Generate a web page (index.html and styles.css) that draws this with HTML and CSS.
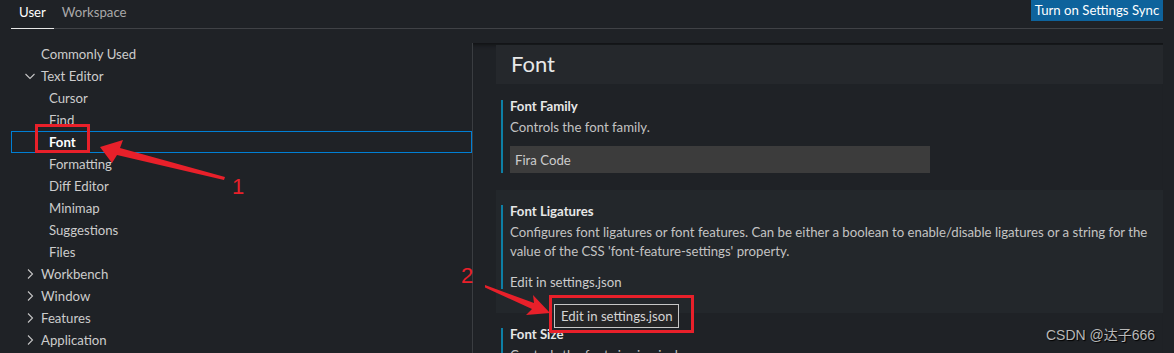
FILE: index.html
```html
<!DOCTYPE html>
<html lang="en">
<head>
  <meta charset="UTF-8">
  <title>Settings</title>
  <link rel="stylesheet" href="styles.css">
</head>
<body>
  <div class="topbar">
    <div class="tabs">
      <span class="tab active">User</span>
      <span class="tab">Workspace</span>
    </div>
    <button class="sync">Turn on Settings Sync</button>
  </div>

  <div class="main">
    <nav class="toc">
      <div class="row top">Commonly Used</div>
      <div class="row top">
        <svg class="chev" viewBox="0 0 16 16"><path d="M3.5 6l4.5 4.5L12.5 6"/></svg>Text Editor
      </div>
      <div class="row child">Cursor</div>
      <div class="row child">Find</div>
      <div class="row child selected">Font</div>
      <div class="row child">Formatting</div>
      <div class="row child">Diff Editor</div>
      <div class="row child">Minimap</div>
      <div class="row child">Suggestions</div>
      <div class="row child">Files</div>
      <div class="row top">
        <svg class="chev" viewBox="0 0 16 16"><path d="M6 3.5l4.5 4.5L6 12.5"/></svg>Workbench
      </div>
      <div class="row top">
        <svg class="chev" viewBox="0 0 16 16"><path d="M6 3.5l4.5 4.5L6 12.5"/></svg>Window
      </div>
      <div class="row top">
        <svg class="chev" viewBox="0 0 16 16"><path d="M6 3.5l4.5 4.5L6 12.5"/></svg>Features
      </div>
      <div class="row top">
        <svg class="chev" viewBox="0 0 16 16"><path d="M6 3.5l4.5 4.5L6 12.5"/></svg>Application
      </div>
    </nav>

    <section class="content">
      <div class="group-title">Font</div>

      <div class="setting">
        <div class="setting-body">
          <div class="setting-title">Font Family</div>
          <div class="setting-desc">Controls the font family.</div>
          <div class="text-input">Fira Code</div>
        </div>
      </div>

      <div class="setting focused">
        <div class="setting-body">
          <div class="setting-title">Font Ligatures</div>
          <div class="setting-desc">Configures font ligatures or font features. Can be either a boolean to enable/disable ligatures or a string for the<br>value of the CSS 'font-feature-settings' property.</div>
          <div class="edit-link">Edit in settings.json</div>
        </div>
      </div>

      <div class="setting">
        <div class="setting-body">
          <div class="setting-title">Font Size</div>
          <div class="setting-desc">Controls the font size in pixels.</div>
        </div>
      </div>
    </section>
  </div>

  <!-- hover tooltip -->
  <div class="tooltip">Edit in settings.json</div>

  <!-- screenshot annotations -->
  <svg class="annot" width="1174" height="353" viewBox="0 0 1174 353">
    <rect x="36.5" y="125.5" width="52" height="26" />
    <rect x="550.5" y="296.5" width="142" height="35" />
    <polygon class="fill" points="100,147 123,140 120,148 225,177 224,180 117,155 112,163" />
    <polygon class="fill" points="550,313 533,295 534,303 485,285 485,287.5 532,309 526,315" />
  </svg>
  <span class="num n1">1</span>
  <span class="num n2">2</span>
  <div class="watermark">CSDN @达子666</div>
</body>
</html>
```

FILE: styles.css
```css
body {
  margin: 0;
  background-color: #1f2226;
  color: #cccccc;
  font-family: Lato, "Liberation Sans", sans-serif;
  font-size: 13.2px;
  width: 1174px;
  height: 353px;
  overflow: hidden;
  position: relative;
}

/* top tabs */
.topbar {
  display: flex;
  justify-content: space-between;
  align-items: flex-start;
  margin: 0 11px;
  height: 28px;
  border-bottom: 1px solid #404246;
}
.tabs {
  display: flex;
}
.tab {
  height: 28px;
  box-sizing: border-box;
  padding: 3px 8px 0;
  line-height: 18px;
  color: #a9a9a9;
}
.tab.active {
  color: #ffffff;
  box-shadow: 0 1px 0 #e7e7e7;
}
.sync {
  width: 132px;
  height: 21px;
  padding: 0;
  border: none;
  background-color: #0e639c;
  color: #ffffff;
  font-family: inherit;
  font-size: 13.2px;
  line-height: 21px;
}

/* layout */
.main {
  display: flex;
  margin: 14px 11px 0;
}
.toc {
  width: 461px;
  border-right: 1px solid #3a3d41;
  flex-shrink: 0;
}
.row {
  height: 22px;
  line-height: 22px;
  box-sizing: border-box;
  display: flex;
  align-items: center;
  border: 1px solid transparent;
  white-space: nowrap;
}
.row.top {
  padding-left: 29px;
}
.row.top .chev {
  margin-left: -19px;
  margin-right: 3px;
}
.row.child {
  padding-left: 37px;
}
.row.selected {
  border-color: #007fd4;
  color: #ffffff;
  font-weight: bold;
}
.chev {
  width: 16px;
  height: 16px;
  fill: none;
  stroke: #c5c5c5;
  stroke-width: 1.1;
}

.content {
  flex: 1;
  padding: 2px 0 0 23px;
  box-shadow: inset 0 6px 5px -5px #0b0c0d;
}
.group-title {
  height: 39px;
  line-height: 38px;
  padding-left: 15px;
  background-color: #25282c;
  color: #e8e8e8;
  font-size: 22px;
  margin-bottom: 1px;
}

/* setting items */
.setting {
  padding: 15px 0 17px 5px;
}
.setting.focused {
  background-color: #23272b;
  padding-bottom: 24px;
}
.setting-body {
  border-left: 2px solid #0d7fa5;
  padding-left: 7px;
}
.setting-title {
  line-height: 13px;
  font-weight: bold;
  color: #e7e7e7;
}
.setting-desc {
  margin-top: 5px;
  line-height: 19px;
  color: #c3c3c3;
}
.text-input {
  margin-top: 9px;
  width: 420px;
  height: 27px;
  box-sizing: border-box;
  padding-left: 5px;
  line-height: 28px;
  background-color: #3c3c3c;
  color: #cccccc;
}
.edit-link {
  margin-top: 14px;
  line-height: 14px;
  color: #cccccc;
}

/* overlays */
.tooltip {
  position: absolute;
  left: 554px;
  top: 304px;
  width: 125px;
  height: 24px;
  box-sizing: border-box;
  border: 1px solid #c6c6c6;
  background-color: #252526;
  color: #d4d4d4;
  padding-left: 6px;
  line-height: 22px;
}
.annot {
  position: absolute;
  left: 0;
  top: 0;
  fill: none;
  stroke: #e8202a;
  stroke-width: 3;
}
.annot .fill {
  fill: #e8202a;
  stroke: none;
}
.num {
  position: absolute;
  color: #e8202a;
  font-family: "Liberation Sans", sans-serif;
  font-size: 22px;
  line-height: 22px;
}
.n1 {
  left: 232px;
  top: 176px;
}
.n2 {
  left: 461px;
  top: 265px;
}
.watermark {
  position: absolute;
  left: 1046px;
  top: 326px;
  font-family: "Liberation Sans", "Noto Sans CJK SC", sans-serif;
  font-size: 14px;
  line-height: 18px;
  color: #b8b8b8;
  text-shadow: 1px 1px 1px #000;
}
```
